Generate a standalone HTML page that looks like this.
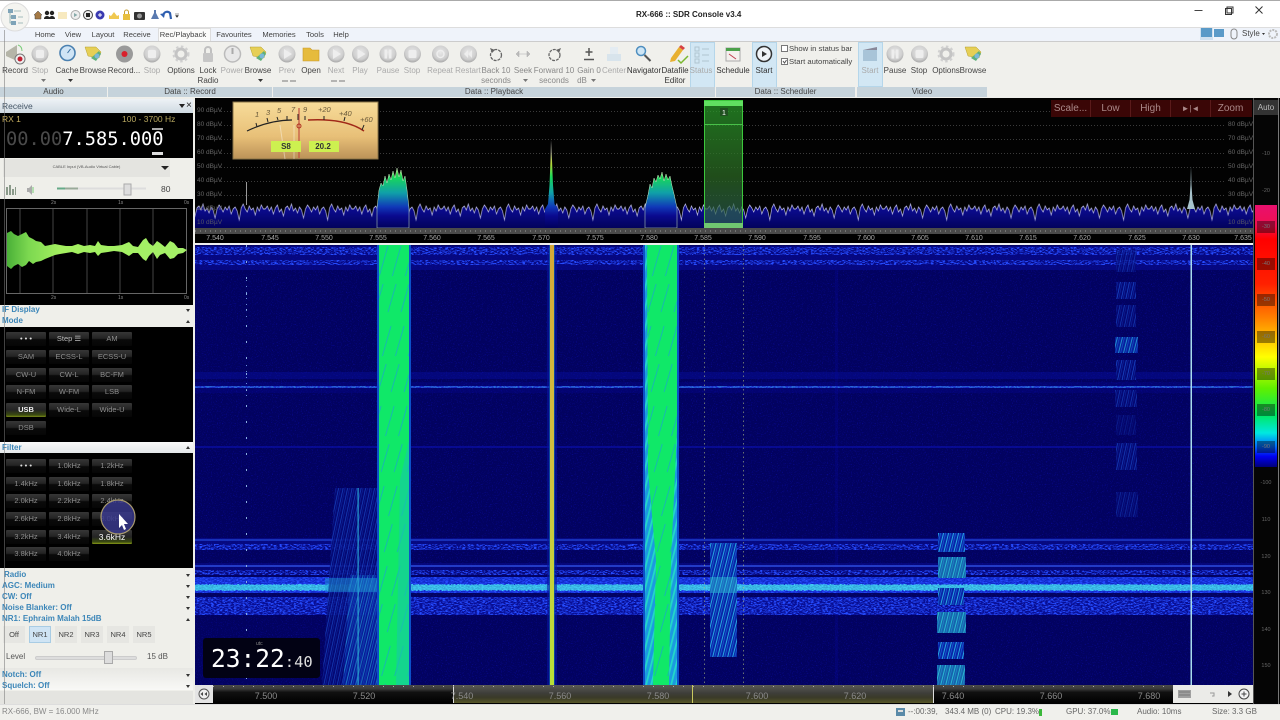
<!DOCTYPE html>
<html><head><meta charset="utf-8"><title>RX-666 :: SDR Console v3.4</title>
<style>
html,body{margin:0;padding:0;width:1280px;height:720px;overflow:hidden;background:#f0f0ec}
body{position:relative;font-family:"Liberation Sans",sans-serif;font-size:8px;color:#333}
div,span.a{position:absolute;white-space:nowrap}
.t{transform:translateX(-50%);line-height:10px;top:66px;color:#444;font-size:8px}
.g{color:#aaa}
.gl{top:87px;height:10px;line-height:10px;background:#c6d3db;text-align:center;color:#444;font-size:8px}
.m{top:29px;line-height:12px;transform:translateX(-50%);color:#444;font-size:7.6px}
.b{background:linear-gradient(#363636 0,#242424 45%,#0a0a0a 55%,#060606);width:40px;height:14px;line-height:14px;text-align:center;color:#8c8c8c;font-size:7.5px;border-radius:1px}
.h{left:2px;color:#3c86b8;font-weight:bold;font-size:8px;line-height:10px}
.ar{left:186px;width:0;height:0;border-left:2px solid transparent;border-right:2px solid transparent;border-top:3px solid #333}
.aru{left:186px;width:0;height:0;border-left:2px solid transparent;border-right:2px solid transparent;border-bottom:3px solid #333}
.nr{top:626px;height:17px;line-height:17px;width:22px;text-align:center;background:#e6e6e2;color:#444;font-size:7.5px}
.db{font-size:6.5px;color:#666;line-height:8px}
.fq{top:234px;transform:translateX(-50%);font-size:7px;color:#aaa;line-height:9px}
.bq{top:691px;transform:translateX(-50%);font-size:9px;color:#8a8a8a;line-height:11px}
.r{top:100px;height:17px;line-height:17px;text-align:center;color:#a88;font-size:10px;width:39px;background:#3a0606;border-right:1px solid #5a1a1a}
.sc{left:1257px;width:18px;height:12px;line-height:12px;text-align:center;font-size:5.5px;color:#777;background:rgba(0,0,0,.4)}
.sd{left:1257px;width:18px;text-align:center;font-size:5.5px;color:#666;line-height:8px}
.st{top:707px;line-height:10px;font-size:8px;color:#666}
</style></head><body>
<div style="left:0;top:0;width:1280px;height:1px;background:#aaa"></div>
<div style="left:0;top:1px;width:1280px;height:26px;background:#fff"></div>
<div style="left:0;top:27px;width:1280px;height:14px;background:#eff3fa;border-top:1px solid #ddd;box-sizing:border-box"></div>
<div style="left:0;top:41px;width:1280px;height:57px;background:#f0f0ec;border-top:1px solid #ccc;box-sizing:border-box"></div>

<div style="left:690px;top:42px;width:23px;height:44px;background:#d2e7f4;border:1px solid #b5d6ea"></div>
<div style="left:752px;top:42px;width:23px;height:44px;background:#d2e7f4;border:1px solid #b5d6ea"></div>
<div style="left:858px;top:42px;width:23px;height:43px;background:#d2e7f4;border:1px solid #b5d6ea"></div>

<svg style="position:absolute;left:0;top:0" width="1280" height="98">
<defs>
<radialGradient id="dg" cx=".5" cy=".4" r=".6"><stop offset="0" stop-color="#e8e8e8"/><stop offset=".7" stop-color="#cfcfcf"/><stop offset="1" stop-color="#a8a8a8"/></radialGradient>
<g id="disc"><circle r="8.5" fill="url(#dg)"/><rect x="-4" y="-4" width="8" height="8" rx="1.5" fill="#eee"/></g>
<g id="pdisc"><circle r="8.5" fill="url(#dg)"/><path d="M-3-5 5 0-3 5z" fill="#eee"/></g>
<g id="pause"><circle r="8.5" fill="url(#dg)"/><rect x="-3.5" y="-4.5" width="2.6" height="9" fill="#eee"/><rect x=".9" y="-4.5" width="2.6" height="9" fill="#eee"/></g>
<g id="gear"><circle r="5" fill="none" stroke="#c4c4c4" stroke-width="3"/><circle r="7.5" fill="none" stroke="#d0d0d0" stroke-width="2" stroke-dasharray="2.5 2.5"/></g>
<g id="brow"><path d="M-8-7 3-7 8-2 6 4-5 2z" fill="#e6cf55" stroke="#b5a030" stroke-width=".5"/><path d="M-2 4 6-3 8 0 3 7z" fill="#5fb07a"/><circle cx="4" cy="2" r="2.5" fill="#7ab8d8"/></g>
</defs>
<circle cx="15" cy="17" r="14" fill="#f4f4f0" stroke="#ddd"/>
<g fill="#7fa4b8"><rect x="8" y="9" width="5" height="4"/><rect x="11" y="15" width="5" height="4"/><rect x="11" y="21" width="5" height="4"/></g>
<path d="M10 13v10h2M10 17h2M14 11h7M18 17h5M18 23h5" stroke="#8aa" fill="none" stroke-width=".8"/>
<path d="M34 15l4-4 4 4h-1v4h-6v-4z" fill="#a57a45" stroke="#444" stroke-width=".5"/>
<circle cx="47" cy="13" r="2.2" fill="#222"/><circle cx="52" cy="13" r="2.2" fill="#222"/><path d="M44 19c0-4 6-4 6 0zM49 19c0-4 6-4 6 0z" fill="#222"/>
<rect x="58" y="12" width="9" height="7" fill="#f7e9bf"/>
<circle cx="75.5" cy="15" r="4.5" fill="#eee" stroke="#aaa"/><path d="M74 13l3.5 2-3.5 2z" fill="#8aa"/>
<circle cx="88" cy="15" r="4.5" fill="#eee" stroke="#444"/><rect x="86" y="13" width="4" height="4" fill="#222"/>
<circle cx="100" cy="15" r="4.5" fill="#3a3ab0"/><path d="M98 15h4M100 13v4" stroke="#fff"/>
<path d="M109 19v-4l2 1 3-4 3 4 2-1v4z" fill="#f0c850"/>
<rect x="123" y="14" width="7" height="6" fill="#e8c040"/><path d="M124.5 14v-2a2 2 0 014 0v2" stroke="#c8a030" fill="none"/>
<rect x="134" y="12" width="11" height="8" rx="1" fill="#333"/><circle cx="139.5" cy="16" r="2.5" fill="#999"/>
<path d="M151 19l4-8 4 8z" fill="#5a7ab0"/><rect x="154" y="10" width="2" height="4" fill="#5a7ab0"/>
<path d="M163 16c1-5 5-5 7-3l1 6" fill="none" stroke="#2f5fb0" stroke-width="2.2"/><path d="M160 14l5-1-1 5z" fill="#2f5fb0"/>
<path d="M175 14h4M175.5 15.5h3l-1.5 2z" fill="#333" stroke="#333" stroke-width=".5"/>

<g transform="translate(14,54)"><path d="M-8-2 3-9V7L-8 2z" fill="#b5b5a8"/><circle cx="6" cy="5" r="5" fill="#eee" stroke="#777"/><circle cx="6" cy="5" r="2.5" fill="#c02030"/><path d="M4-9c3 1 4 3 4 6" stroke="#7c7" fill="none"/></g>
<use href="#disc" x="40" y="54"/>
<circle cx="67.5" cy="53" r="7.5" fill="#cfe4f5" stroke="#4a80b0" stroke-width="1.6"/><path d="M67.5 53l3-4" stroke="#3a70a0"/>
<use href="#brow" x="93" y="54"/>
<circle cx="124.5" cy="54" r="8.5" fill="#9a9a9a"/><circle cx="124.5" cy="54" r="3" fill="#d8202c"/>
<use href="#disc" x="152" y="54"/>
<use href="#gear" x="181" y="54"/>
<rect x="203" y="53" width="10" height="9" rx="1" fill="#c6c6c6"/><path d="M205 53v-3a3 3 0 016 0v3" stroke="#c0c0c0" stroke-width="2" fill="none"/>
<circle cx="232.5" cy="54" r="8" fill="#e8e8e8" stroke="#bbb" stroke-width="1.5"/><path d="M232.5 48v6" stroke="#aaa" stroke-width="2"/>
<use href="#brow" x="258" y="54"/>
<use href="#pdisc" x="287" y="54"/>
<path d="M303 48h7l2 2h7v11h-16z" fill="#e6bb3c" stroke="#c8992a" stroke-width=".6"/>
<use href="#pdisc" x="336" y="54"/><use href="#pdisc" x="360.5" y="54"/>
<use href="#pause" x="388" y="54"/><use href="#disc" x="412.5" y="54"/>
<circle cx="440.5" cy="54" r="8.5" fill="url(#dg)"/><circle cx="440.5" cy="54" r="3.5" fill="none" stroke="#eee" stroke-width="1.5"/>
<circle cx="468.5" cy="54" r="8.5" fill="url(#dg)"/><path d="M472 50v8l-4-4zM468 50v8l-4-4z" fill="#eee"/>
<circle cx="496" cy="55" r="5.5" fill="none" stroke="#666" stroke-width="1.3" stroke-dasharray="3 1"/><path d="M490 48l5 2-3 3z" fill="#666"/>
<path d="M516 54l3-3v6zM530 54l-3-3v6zM519 54h8" fill="#bbb" stroke="#aaa" stroke-width=".5"/>
<circle cx="554.5" cy="55" r="5.5" fill="none" stroke="#666" stroke-width="1.3" stroke-dasharray="3 1"/><path d="M561 48l-5 2 3 3z" fill="#666"/>
<path d="M589 48v8M585.5 52h7M584 59.5h10" stroke="#555" stroke-width="1.5" fill="none"/>
<rect x="607" y="54" width="14" height="7" fill="#d8e4ec"/><rect x="610" y="47" width="8" height="7" fill="#e4ecf2"/>
<circle cx="641" cy="51" r="4.5" fill="#cfe6f5" stroke="#4f8fc0" stroke-width="1.5"/><path d="M644.5 55l6 6" stroke="#555" stroke-width="2"/>
<path d="M671 58l8-11 4 3-8 11-5 1z" fill="#e8b030"/><path d="M679 47l2-2 4 3-2 2z" fill="#d84040"/><path d="M678 60l3 3 7-7" stroke="#7ab830" stroke-width="1.5" fill="none"/>
<g fill="none" stroke="#b0c4d0"><rect x="695" y="47" width="4" height="4"/><rect x="695" y="53" width="4" height="4"/><rect x="695" y="59" width="4" height="4"/><path d="M702 49h7M702 55h7M702 61h7"/></g>
<rect x="726" y="48" width="14" height="13" fill="#f4f0ee" stroke="#aaa"/><rect x="726" y="48" width="14" height="3" fill="#4ba04a"/><path d="M729 54l7 5" stroke="#c04050"/>
<circle cx="764" cy="54" r="7.5" fill="#f0f4f8" stroke="#333" stroke-width="1.5"/><path d="M762 51l5 3-5 3z" fill="#333"/>
<rect x="863" y="50" width="14" height="11" fill="#a8c4d8"/><path d="M863 50l14-3v3z" fill="#889"/>
<use href="#pause" x="895" y="54"/><use href="#disc" x="919.5" y="54"/><use href="#gear" x="946" y="54"/><use href="#brow" x="973" y="54"/>
<rect x="781.5" y="45.5" width="6" height="6" fill="#fff" stroke="#777"/>
<rect x="781.5" y="58.5" width="6" height="6" fill="#fff" stroke="#777"/><path d="M783 61l1.5 2 2-3" stroke="#555" fill="none"/>
<g fill="#333"><path d="M41 79h5l-2.5 3z" fill="#777"/><path d="M68 79h5l-2.5 3z"/><path d="M258 79h5l-2.5 3z"/><path d="M523 79h5l-2.5 3z" fill="#777"/><path d="M591 79h5l-2.5 3z" fill="#777"/>
<path d="M282 81h6M290 81h6" stroke="#777"/><path d="M331 81h6M339 81h6" stroke="#777"/></g>
<path d="M1194.5 10.5h8" stroke="#444"/><rect x="1225.5" y="8.5" width="6" height="6" fill="#fff" stroke="#333"/><rect x="1227" y="7" width="6" height="6" fill="none" stroke="#333"/>
<path d="M1255.5 6.5l7 7M1262.5 6.5l-7 7" stroke="#333"/>
<rect x="1201" y="28" width="11" height="9" fill="#5b9ac8"/><rect x="1214" y="29" width="10" height="8" fill="#5b9ac8"/><rect x="1200" y="28" width="13" height="12" fill="#5b9ac8" opacity=".2"/>
<rect x="1231" y="29" width="6" height="10" rx="3" fill="none" stroke="#888"/>
<circle cx="1273" cy="34" r="4" fill="none" stroke="#bbb" stroke-width="2" stroke-dasharray="2 1"/><path d="M1262 33h3l-1.5 2z" fill="#333"/>
</svg>

<div style="left:636px;top:10px;line-height:10px;color:#222;font-weight:bold;font-size:8px">RX-666 :: SDR Console v3.4</div>
<div style="left:158px;top:28px;width:53px;height:13px;background:#fbfbfa;border:1px solid #ddd;border-bottom:0;box-sizing:border-box"></div>
<div class="m" style="left:45px">Home</div><div class="m" style="left:73px">View</div><div class="m" style="left:103px">Layout</div><div class="m" style="left:137px">Receive</div><div class="m" style="left:183px">Rec/Playback</div><div class="m" style="left:234px">Favourites</div><div class="m" style="left:279px">Memories</div><div class="m" style="left:315px">Tools</div><div class="m" style="left:341px">Help</div>
<div style="left:1242px;top:29px;line-height:10px;color:#444">Style</div>

<div class="t" style="left:15px">Record</div><div class="t g" style="left:40px">Stop</div><div class="t" style="left:67px">Cache</div><div class="t" style="left:93px">Browse</div>
<div class="t" style="left:124px">Record...</div><div class="t g" style="left:152px">Stop</div><div class="t" style="left:181px">Options</div><div class="t" style="left:208px">Lock</div><div class="t" style="left:208px;top:76px">Radio</div><div class="t g" style="left:232px">Power</div><div class="t" style="left:258px">Browse</div>
<div class="t g" style="left:287px">Prev</div><div class="t" style="left:311px">Open</div><div class="t g" style="left:336px">Next</div><div class="t g" style="left:360px">Play</div><div class="t g" style="left:388px">Pause</div><div class="t g" style="left:412px">Stop</div><div class="t g" style="left:440px">Repeat</div><div class="t g" style="left:468px">Restart</div>
<div class="t g" style="left:496px;color:#888">Back 10</div><div class="t g" style="left:496px;top:76px;color:#888">seconds</div><div class="t g" style="left:523px;color:#888">Seek</div><div class="t g" style="left:554px;color:#888">Forward 10</div><div class="t g" style="left:554px;top:76px;color:#888">seconds</div><div class="t g" style="left:589px;color:#888">Gain 0</div><div class="t g" style="left:582px;top:76px;color:#888">dB</div><div class="t g" style="left:614px">Center</div><div class="t" style="left:644px;color:#333">Navigator</div><div class="t" style="left:675px;color:#333">Datafile</div><div class="t" style="left:675px;top:76px;color:#333">Editor</div><div class="t g" style="left:701px">Status</div><div class="t" style="left:733px;color:#333">Schedule</div><div class="t" style="left:764px;color:#333">Start</div>
<div style="left:789px;top:44px;line-height:10px;color:#444;font-size:7.7px">Show in status bar</div><div style="left:789px;top:57px;line-height:10px;color:#444;font-size:7.7px">Start automatically</div>
<div class="t g" style="left:870px">Start</div><div class="t" style="left:895px">Pause</div><div class="t" style="left:919px">Stop</div><div class="t" style="left:946px">Options</div><div class="t" style="left:973px">Browse</div>

<div class="gl" style="left:0;width:107px">Audio</div><div class="gl" style="left:108px;width:164px">Data :: Record</div><div class="gl" style="left:273px;width:442px">Data :: Playback</div><div class="gl" style="left:716px;width:139px">Data :: Scheduler</div><div class="gl" style="left:857px;width:130px">Video</div>

<div style="left:195px;top:98px;width:1085px;height:607px;background:#000"></div>

<svg style="position:absolute;left:195px;top:98px" width="1058" height="147" viewBox="195 98 1058 147">
<defs>
<linearGradient id="sp" gradientUnits="userSpaceOnUse" x1="0" y1="140" x2="0" y2="228"><stop offset="0" stop-color="#ddd"/><stop offset=".14" stop-color="#b8b8a0"/><stop offset=".27" stop-color="#b8d838"/><stop offset=".42" stop-color="#18d858"/><stop offset=".6" stop-color="#10a0a8"/><stop offset=".76" stop-color="#1038b8"/><stop offset=".86" stop-color="#0a0a90"/><stop offset="1" stop-color="#00005c"/></linearGradient>
<linearGradient id="fl" gradientUnits="userSpaceOnUse" x1="0" y1="0" x2="0" y2="33"><stop offset="0" stop-color="#0e0e98"/><stop offset=".5" stop-color="#0a0a88"/><stop offset="1" stop-color="#02025c"/></linearGradient>
<pattern id="tr" x="0" y="195" width="132" height="33" patternUnits="userSpaceOnUse" patternTransform="scale(.67 1)">
<path d="M0 33V14L3 11 6 16 9 12 12 19 15 13 18 10 21 17 24 14 27 21 30 13 33 11 36 15 39 9 42 16 45 13 48 18 51 12 54 15 57 23 60 14 63 10 66 13 69 17 72 12 75 15 78 11 81 19 84 14 87 12 90 16 93 25 96 13 99 9 102 14 105 17 108 11 111 15 114 13 117 20 120 12 123 16 126 10 129 14 132 14V33z" fill="url(#fl)"/>
<path d="M0 14L3 11 6 16 9 12 12 19 15 13 18 10 21 17 24 14 27 21 30 13 33 11 36 15 39 9 42 16 45 13 48 18 51 12 54 15 57 23 60 14 63 10 66 13 69 17 72 12 75 15 78 11 81 19 84 14 87 12 90 16 93 25 96 13 99 9 102 14 105 17 108 11 111 15 114 13 117 20 120 12 123 16 126 10 129 14 132 14" fill="none" stroke="#b8b8e4" stroke-width="1"/>
</pattern>
<linearGradient id="mk" x1="0" y1="0" x2="0" y2="1"><stop offset="0" stop-color="#2aa02a"/><stop offset=".6" stop-color="#2c6a24"/><stop offset="1" stop-color="#2a5a58"/></linearGradient>
</defs>
<rect x="195" y="98" width="1058" height="147" fill="#020202"/>
<g stroke="#3a3a3a" stroke-dasharray="1 2"><path d="M221 111.5H1226M221 125.5H1226M221 139.5H1226M221 153.5H1226M221 167.5H1226M221 181.5H1226M221 195.5H1226"/></g>
<rect x="195" y="195" width="1058" height="33" fill="url(#tr)"/>
<path d="M377 228V208L379 190 381 183 383 186 385 176 387 183 389 174 391 180 393 171 395 178 397 168 399 177 401 170 403 181 405 176 407 190 409 208V228z" fill="url(#sp)" stroke="#c8e8c0" stroke-width=".5"/>
<path d="M645 228V208L648 195 650 184 652 188 654 178 656 182 658 175 660 179 662 172 664 181 666 174 668 180 670 176 672 186 674 194 677 208V228z" fill="url(#sp)" stroke="#c8e8c0" stroke-width=".5"/>
<path d="M545 228V209L548 204 549.5 185 550.5 160 551 140 552 160 553 185 554.5 204 558 209V228z" fill="url(#sp)"/>
<path d="M246.5 205V182" stroke="#999"/>
<path d="M1187 209L1189.5 200 1190.5 185 1191 166 1191.5 185 1192.5 200 1195 209z" fill="#a8c4cc"/>
<rect x="704" y="100" width="39" height="128" fill="url(#mk)" opacity=".72"/>
<rect x="704.5" y="100.5" width="38" height="127" fill="none" stroke="#3cc83c"/>
<rect x="704" y="101" width="39" height="5" fill="#60e060"/><path d="M704 124.5h39" stroke="#48c048"/>
<rect x="704" y="223" width="39" height="5" fill="#70c870"/>
<rect x="720" y="108" width="8" height="8" fill="#205020"/>
<text x="724" y="115" font-size="7" fill="#fff" text-anchor="middle" font-family="Liberation Sans">1</text>
<rect x="195" y="228" width="1058" height="6" fill="#4a4a4a"/>
<path d="M195 231H1253" stroke="#999" stroke-dasharray="1 4"/>
<rect x="195" y="234" width="1058" height="9" fill="#000"/>
<rect x="195" y="243" width="1058" height="2" fill="#eee"/>
<defs><linearGradient id="vu" x1="0" y1="0" x2="0" y2="1"><stop offset="0" stop-color="#f7dc9a"/><stop offset=".6" stop-color="#e8c078"/><stop offset="1" stop-color="#bb9258"/></linearGradient></defs>
<rect x="233" y="102" width="145" height="57" fill="url(#vu)" stroke="#8a7448"/>
<path d="M247 131Q270 120 292 120" stroke="#222" stroke-width="1.2" fill="none"/>
<path d="M308 120Q345 118 364 131" stroke="#a02818" stroke-width="1.5" fill="none"/>
<path d="M257 127l-1-4M268 122l-1-4M278 120l-1-3M287 120v-4M298 120v-6M305 120v-4M324 120v-4M344 121l1-4M362 130l2-5" stroke="#222" fill="none"/>
<g font-family="Liberation Sans" font-style="italic" font-size="7.5" fill="#6a5a3a"><text x="255" y="117">1</text><text x="266" y="115">3</text><text x="277" y="113">5</text><text x="291" y="112">7</text><text x="303" y="112">9</text><text x="318" y="112">+20</text><text x="339" y="116">+40</text><text x="360" y="122">+60</text></g>
<path d="M299 108V158" stroke="#c05040" stroke-width="1.2"/><circle cx="299" cy="126" r="2" fill="none" stroke="#b03020" stroke-width="1"/>
<path d="M280 125L285 159M294 125V159" stroke="#fff" stroke-opacity=".4"/>
<rect x="271" y="141" width="30" height="11" fill="#cdf050"/><rect x="309" y="141" width="30" height="11" fill="#cdf050"/>
<g font-family="Liberation Sans" font-weight="bold" font-size="8" fill="#333" text-anchor="middle"><text x="286" y="149">S8</text><text x="323" y="149">20.2</text></g>
</svg>

<div style="left:1051px;top:100px;width:201px;height:17px;background:#3a0606"></div>
<div class="r" style="left:1051px">Scale...</div><div class="r" style="left:1091px">Low</div><div class="r" style="left:1131px">High</div><div class="r" style="left:1171px;font-size:8px">►|◄</div><div class="r" style="left:1211px;border:0">Zoom</div>

<div class="db" style="left:197px;top:107px">90 dBµV</div><div class="db" style="left:197px;top:121px">80 dBµV</div><div class="db" style="left:197px;top:135px">70 dBµV</div><div class="db" style="left:197px;top:149px">60 dBµV</div><div class="db" style="left:197px;top:163px">50 dBµV</div><div class="db" style="left:197px;top:177px">40 dBµV</div><div class="db" style="left:197px;top:191px">30 dBµV</div><div class="db" style="left:197px;top:205px">20 dBµV</div><div class="db" style="left:197px;top:219px;color:#556">10 dBµV</div>
<div class="db" style="left:1228px;top:121px">80 dBµV</div><div class="db" style="left:1228px;top:135px">70 dBµV</div><div class="db" style="left:1228px;top:149px">60 dBµV</div><div class="db" style="left:1228px;top:163px">50 dBµV</div><div class="db" style="left:1228px;top:177px">40 dBµV</div><div class="db" style="left:1228px;top:191px">30 dBµV</div><div class="db" style="left:1228px;top:219px;color:#556">10 dBµV</div>

<div class="fq" style="left:215px">7.540</div><div class="fq" style="left:270px">7.545</div><div class="fq" style="left:324px">7.550</div><div class="fq" style="left:378px">7.555</div><div class="fq" style="left:432px">7.560</div><div class="fq" style="left:486px">7.565</div><div class="fq" style="left:541px">7.570</div><div class="fq" style="left:595px">7.575</div><div class="fq" style="left:649px">7.580</div><div class="fq" style="left:703px">7.585</div><div class="fq" style="left:757px">7.590</div><div class="fq" style="left:812px">7.595</div><div class="fq" style="left:866px">7.600</div><div class="fq" style="left:920px">7.605</div><div class="fq" style="left:974px">7.610</div><div class="fq" style="left:1028px">7.615</div><div class="fq" style="left:1082px">7.620</div><div class="fq" style="left:1137px">7.625</div><div class="fq" style="left:1191px">7.630</div><div class="fq" style="left:1243px">7.635</div>

<svg style="position:absolute;left:195px;top:245px" width="1058" height="440" viewBox="195 245 1058 440">
<defs>
<filter id="n" x="0" y="0" width="100%" height="100%" color-interpolation-filters="sRGB"><feTurbulence type="fractalNoise" baseFrequency="0.8 0.9" numOctaves="2" seed="3"/><feColorMatrix values="0 0 0 0 .03  0 0 0 0 .03  0 0 0 0 .55  5 0 0 0 -2.9"/></filter>
<filter id="nh" x="0" y="0" width="100%" height="100%" color-interpolation-filters="sRGB"><feTurbulence type="fractalNoise" baseFrequency="0.35 1.1" numOctaves="2" seed="9"/><feColorMatrix values="0 0 0 0 .15  0 0 0 0 .3  0 0 0 0 1  7 0 0 0 -3.3"/></filter>
<filter id="nc" x="0" y="0" width="100%" height="100%" color-interpolation-filters="sRGB"><feTurbulence type="fractalNoise" baseFrequency="0.5 1.2" numOctaves="2" seed="5"/><feColorMatrix values="0 0 0 0 .25  0 0 0 0 .8  0 0 0 0 .95  7 0 0 0 -3"/></filter>
<pattern id="s1" width="5" height="30" patternUnits="userSpaceOnUse" patternTransform="skewX(-14)"><rect width="5" height="30" fill="#0826a8"/><rect x="1" width="1" height="30" fill="#28a8e0"/><rect x="3.3" width=".7" height="30" fill="#1868d8"/></pattern>
<pattern id="s2" width="4.5" height="30" patternUnits="userSpaceOnUse" patternTransform="skewX(-12)"><rect width="4.5" height="30" fill="#040a78"/><rect x="1" width=".7" height="30" fill="#1c50d0"/><rect x="3" width=".4" height="30" fill="#1438b8"/></pattern>
<pattern id="s3" width="5" height="26" patternUnits="userSpaceOnUse" patternTransform="skewX(-14)"><rect width="5" height="26" fill="#1c9ae0"/><rect x="1" width="1.8" height="26" fill="#22d8c8"/></pattern>
<pattern id="g1" width="13" height="80" patternUnits="userSpaceOnUse" patternTransform="skewX(-16)"><rect width="13" height="80" fill="#10e868"/><rect x="3" y="6" width="1" height="30" fill="#18b8b0"/><rect x="9" y="44" width="1" height="28" fill="#18b8b0"/></pattern>
<clipPath id="w"><rect x="195" y="245" width="1058" height="440"/></clipPath>
<linearGradient id="yl" x1="0" y1="0" x2="0" y2="1"><stop offset="0" stop-color="#d4a838"/><stop offset=".5" stop-color="#d0c040"/><stop offset="1" stop-color="#b8e038"/></linearGradient>
</defs>
<g clip-path="url(#w)">
<rect x="195" y="245" width="1058" height="440" fill="#020260"/>
<rect x="195" y="245" width="1058" height="440" filter="url(#n)"/>
<rect x="195" y="246" width="1058" height="24" fill="#0a10a8" opacity=".45"/>
<rect x="195" y="247" width="1058" height="8" filter="url(#nh)"/><rect x="195" y="260" width="1058" height="5" filter="url(#nh)"/>
<rect x="835" y="270" width="3" height="415" fill="#0808a0" opacity=".25"/>
<rect x="195" y="372" width="1058" height="7" fill="#0a10b0" opacity=".35"/>
<rect x="195" y="386" width="1058" height="2" fill="#2030d0"/><rect x="195" y="386" width="1058" height="2" filter="url(#nc)" opacity=".6"/><rect x="195" y="382" width="1058" height="11" fill="#0808a0" opacity=".25"/>
<rect x="195" y="446" width="1058" height="2" fill="#0c10b0" opacity=".6"/>
<rect x="195" y="538" width="1058" height="12" fill="#0a10a0" opacity=".5"/><rect x="195" y="539" width="1058" height="2" fill="#2040d0" opacity=".7"/><rect x="195" y="544" width="1058" height="6" filter="url(#nh)"/>
<rect x="195" y="563" width="1058" height="12" fill="#0a0e98" opacity=".45"/><rect x="195" y="565" width="1058" height="2" fill="#2a48d8" opacity=".8"/><rect x="195" y="570" width="1058" height="5" filter="url(#nh)"/>
<rect x="195" y="577" width="1058" height="16" fill="#1028c8"/><rect x="195" y="577" width="1058" height="16" filter="url(#nh)"/>
<rect x="195" y="585" width="1058" height="5" fill="#34a8d8"/><rect x="195" y="584" width="1058" height="7" filter="url(#nc)"/>
<rect x="195" y="597" width="1058" height="18" fill="#0c14a8" opacity=".7"/><rect x="195" y="597" width="1058" height="18" filter="url(#nh)"/>
<polygon points="335,488 378,488 378,685 322,685" fill="url(#s2)" opacity=".85"/>
<polygon points="350,575 378,575 378,685 343,685" fill="url(#s1)" opacity=".6"/>
<rect x="357.5" y="488" width="1.2" height="197" fill="#28a0d0"/>
<rect x="325" y="578" width="55" height="14" fill="#20a0d8" opacity=".45"/>
<polygon points="379,245 410,245 409,685 379,685" fill="url(#g1)"/>
<polygon points="400,480 409,440 409,685 396,685" fill="#18c8a8" opacity=".6"/>
<rect x="645" y="245" width="32" height="440" fill="url(#s3)"/>
<polygon points="647,245 677,245 677,430 671,560 669,685 653,685 656,560 648,470" fill="url(#g1)"/>
<rect x="377" y="245" width="2" height="440" fill="#0c50c8"/><rect x="409" y="245" width="2" height="440" fill="#0c50c8"/>
<rect x="643" y="245" width="2" height="440" fill="#0c50c8"/><rect x="677" y="245" width="2" height="440" fill="#0c50c8"/>
<rect x="547" y="245" width="10" height="440" fill="#0814a0" opacity=".6"/>
<rect x="549" y="245" width="6" height="440" fill="#1060a0" opacity=".7"/>
<rect x="550" y="245" width="4" height="440" fill="url(#yl)"/>
<rect x="710" y="543" width="27" height="114" fill="url(#s1)"/>
<rect x="710" y="577" width="27" height="16" fill="#30c8d8" opacity=".45"/>
<g fill="url(#s1)"><rect x="938" y="533" width="27" height="19"/><rect x="938" y="557" width="28" height="21"/><rect x="938" y="588" width="26" height="17"/><rect x="937" y="612" width="29" height="21"/><rect x="938" y="642" width="26" height="17"/><rect x="937" y="665" width="28" height="20"/></g>
<g fill="#30d8b8" opacity=".35"><rect x="938" y="557" width="28" height="21"/><rect x="937" y="612" width="29" height="21"/><rect x="937" y="665" width="28" height="20"/></g>
<g fill="url(#s2)"><rect x="1116" y="282" width="20" height="17"/><rect x="1116" y="360" width="20" height="20"/><rect x="1116" y="250" width="20" height="22" opacity=".7"/><rect x="1116" y="305" width="20" height="22" opacity=".8"/><rect x="1115" y="390" width="22" height="17" opacity=".8"/><rect x="1116" y="415" width="20" height="20" opacity=".4"/><rect x="1116" y="443" width="21" height="27" opacity=".85"/><rect x="1116" y="492" width="22" height="25" opacity=".6"/></g>
<rect x="1115" y="337" width="23" height="16" fill="url(#s1)" opacity=".85"/>
<rect x="1190.5" y="245" width="1.5" height="440" fill="#a8dcec"/>
<path d="M246.5 245V685" stroke="#8ab0e0" stroke-dasharray="2 14"/>
<path d="M246.5 280V320M246.5 365V400" stroke="#6a90d8" stroke-dasharray="1 5"/>
<path d="M704.5 245V685M743.5 245V685" stroke="#b8c880" stroke-width=".8" stroke-dasharray="1.5 3" opacity=".7"/>
</g>
</svg>

<div style="left:203px;top:638px;width:117px;height:40px;background:#020214;border-radius:3px"></div>
<div style="left:256px;top:641px;font-size:5px;color:#888;line-height:6px">utc</div>
<div style="left:211px;top:645px;font-family:'DejaVu Sans Mono',monospace;font-size:24.5px;color:#fff;line-height:28px">23:22<span style="font-size:15.5px;color:#ddd">:40</span></div>

<div style="left:195px;top:685px;width:18px;height:18px;background:#e4e4e4"></div>
<div style="left:213px;top:685px;width:240px;height:18px;background:linear-gradient(#4a4a4a 0,#3a3a3a 22%,#111 40%,#000)"></div>
<div style="left:453px;top:685px;width:480px;height:18px;background:linear-gradient(#5a5a55 0,#3e3e3a 45%,#3a3a28 70%,#565628)"></div>
<div style="left:933px;top:685px;width:240px;height:18px;background:linear-gradient(#4a4a4a 0,#3a3a3a 22%,#111 40%,#000)"></div>
<div style="left:1173px;top:685px;width:80px;height:18px;background:#ebebe8"></div>
<div style="left:453px;top:685px;width:1px;height:18px;background:#ddd"></div><div style="left:692px;top:685px;width:1px;height:18px;background:#c8c860"></div><div style="left:933px;top:685px;width:1px;height:18px;background:#ddd"></div>
<svg style="position:absolute;left:195px;top:685px" width="1058" height="18">
<path d="M18 1.5H978" stroke="#aaa" stroke-dasharray="1 9"/>
<circle cx="9" cy="9" r="5" fill="#eee" stroke="#555"/><path d="M8 7L5.5 9 8 11zM12 7L9.5 9 12 11z" fill="#444"/>
<rect x="983" y="5" width="13" height="8" fill="#a0a0a0"/><path d="M984 7h11M984 10h11" stroke="#777"/>
<path d="M1015 8l4 0v3h-2" stroke="#999" fill="none"/><path d="M1033 6l4 3-4 3z" fill="#333"/>
<circle cx="1049" cy="9" r="5" fill="#f4f4f4" stroke="#444"/><path d="M1046.5 9h5M1049 6.5v5" stroke="#444"/>
</svg>
<div class="bq" style="left:266px">7.500</div><div class="bq" style="left:364px">7.520</div><div class="bq" style="left:462px">7.540</div><div class="bq" style="left:560px">7.560</div><div class="bq" style="left:658px">7.580</div><div class="bq" style="left:757px">7.600</div><div class="bq" style="left:855px">7.620</div><div class="bq" style="left:953px">7.640</div><div class="bq" style="left:1051px">7.660</div><div class="bq" style="left:1149px">7.680</div>

<div style="left:1253px;top:98px;width:27px;height:607px;background:#050505"></div>
<div style="left:1253px;top:98px;width:1px;height:607px;background:#555"></div>
<div style="left:1254px;top:100px;width:24px;height:15px;line-height:15px;background:#333;color:#bbb;font-size:8px;text-align:center">Auto</div>
<div style="left:1278px;top:98px;width:1px;height:607px;background:#777"></div>
<div style="left:1255px;top:205px;width:22px;height:262px;background:linear-gradient(#e8106e 0,#f01050 8%,#ff0000 13%,#ff2000 30%,#ff8000 43%,#ffff00 58%,#60f000 70%,#00e860 80%,#00e8e0 87%,#0070ff 92%,#0000f0 96%,#00007a 100%)"></div>
<div class="sd" style="top:150px">-10</div><div class="sd" style="top:187px">-20</div>
<div class="sc" style="top:221px">-30</div><div class="sc" style="top:258px">-40</div><div class="sc" style="top:294px">-50</div><div class="sc" style="top:331px">-60</div><div class="sc" style="top:368px">-70</div><div class="sc" style="top:404px">-80</div><div class="sc" style="top:441px">-90</div>
<div class="sd" style="top:479px">-100</div><div class="sd" style="top:516px">110</div><div class="sd" style="top:553px">120</div><div class="sd" style="top:589px">130</div><div class="sd" style="top:626px">140</div><div class="sd" style="top:662px">150</div>

<div style="left:0;top:98px;width:195px;height:607px;background:#efefea"></div>
<div style="left:0;top:99px;width:193px;height:14px;background:linear-gradient(#eef2f6,#cfdae2);line-height:14px;text-indent:2px;color:#456;font-size:8.5px">Receive</div>
<div style="left:179px;top:104px;width:0;height:0;border-left:3px solid transparent;border-right:3px solid transparent;border-top:4px solid #222"></div>
<div style="left:186px;top:100px;line-height:11px;font-size:10px;color:#222">×</div>
<div style="left:0;top:113px;width:193px;height:45px;background:#000"></div>
<div style="left:2px;top:114px;line-height:10px;color:#c8b060;font-size:8.5px">RX 1</div>
<div style="left:122px;top:114px;line-height:10px;color:#b8a860;font-size:8.5px">100 - 3700 Hz</div>
<div style="left:6px;top:129px;font-family:'DejaVu Sans Mono',monospace;font-size:18.7px;line-height:22px;color:#fff"><span style="color:#4a4a4a">00.00</span>7.585.000</div>
<div style="left:152px;top:128px;width:11px;height:2px;background:#aaa"></div><div style="left:152px;top:152px;width:11px;height:3px;background:#ddd"></div>
<div style="left:3px;top:159px;width:167px;height:18px;background:#e4e4e0;line-height:16px;text-align:center;font-size:4px;color:#555">CABLE Input (VB-Audio Virtual Cable)</div>
<div style="left:161px;top:166px;width:0;height:0;border-left:4px solid transparent;border-right:4px solid transparent;border-top:4px solid #222"></div>
<svg style="position:absolute;left:0;top:180px" width="195" height="20">
<g fill="#8a9a8a"><rect x="6" y="7" width="2" height="8"/><rect x="9" y="5" width="2" height="10"/><rect x="12" y="9" width="2" height="6"/><rect x="15" y="7" width="1" height="8"/></g>
<path d="M27 8h2l3-3v10l-3-3h-2z" fill="#aaa"/><path d="M33 7v6" stroke="#7c7"/>
<rect x="57" y="7.5" width="89" height="2" fill="#ddd"/><rect x="57" y="7.5" width="21" height="2" fill="#9a9"/><rect x="57" y="7.5" width="8" height="2" fill="#6a8"/>
<rect x="124" y="4" width="7" height="11" fill="#ddd" stroke="#aaa"/>
</svg>
<div style="left:161px;top:184px;line-height:10px;color:#444;font-size:8.5px">80</div>

<div style="left:0;top:199px;width:193px;height:106px;background:#000"></div>
<svg style="position:absolute;left:0;top:199px" width="193" height="106">
<defs><linearGradient id="au" x1="0" y1="0" x2="1" y2="0"><stop offset="0" stop-color="#4ab038"/><stop offset=".12" stop-color="#7cd850"/><stop offset=".3" stop-color="#a4f060"/><stop offset="1" stop-color="#a4f068"/></linearGradient></defs>
<rect x="6.5" y="9.5" width="180" height="85" fill="none" stroke="#666"/>
<path d="M20 10V94M53 10V94M87 10V94M120 10V94M153 10V94" stroke="#444"/>
<path d="M7 34L11 32 14 35 18 37 22 35 26 33 29 38 33 40 36 42 41 43 45 47 50 46 55 45 60 46 66 47 72 47 78 45 84 47 90 46 95 47 98 42 101 46 108 47 114 47 122 46 129 43 133 47 138 48 143 41 146 39 149 44 153 47 157 42 160 44 165 48 170 42 174 44 178 49 183 49 187 51 183 54 178 55 174 59 170 60 165 54 160 56 157 60 153 53 149 57 146 62 143 60 138 54 133 54 129 57 122 53 114 52 108 53 101 54 98 57 95 53 90 54 84 53 78 55 72 53 66 54 60 55 55 56 50 58 45 60 41 62 36 63 33 65 29 62 26 66 22 68 18 65 14 67 11 70 7 67z" fill="url(#au)"/>
</svg>
<div style="left:51px;top:200px;font-size:5px;color:#888;line-height:6px">2s</div><div style="left:118px;top:200px;font-size:5px;color:#888;line-height:6px">1s</div><div style="left:184px;top:200px;font-size:5px;color:#888;line-height:6px">0s</div>
<div style="left:51px;top:295px;font-size:5px;color:#888;line-height:6px">2s</div><div style="left:118px;top:295px;font-size:5px;color:#888;line-height:6px">1s</div><div style="left:184px;top:295px;font-size:5px;color:#888;line-height:6px">0s</div>

<div class="h" style="top:305px">IF Display</div><div class="ar" style="top:309px"></div>
<div class="h" style="top:316px">Mode</div><div class="aru" style="top:320px"></div>
<div style="left:0;top:327px;width:193px;height:115px;background:#000"></div>
<div class="b" style="left:6px;top:332px;color:#ddd">• • •</div><div class="b" style="left:49px;top:332px;color:#bbb">Step ☰</div><div class="b" style="left:92px;top:332px">AM</div>
<div class="b" style="left:6px;top:350px">SAM</div><div class="b" style="left:49px;top:350px">ECSS-L</div><div class="b" style="left:92px;top:350px">ECSS-U</div>
<div class="b" style="left:6px;top:368px">CW-U</div><div class="b" style="left:49px;top:368px">CW-L</div><div class="b" style="left:92px;top:368px">BC-FM</div>
<div class="b" style="left:6px;top:385px">N-FM</div><div class="b" style="left:49px;top:385px">W-FM</div><div class="b" style="left:92px;top:385px">LSB</div>
<div class="b" style="left:6px;top:403px;color:#eee;font-weight:bold;background:linear-gradient(#363636,#242424 50%,#3a4a10 85%,#7a8a18)">USB</div><div class="b" style="left:49px;top:403px">Wide-L</div><div class="b" style="left:92px;top:403px">Wide-U</div>
<div class="b" style="left:6px;top:421px">DSB</div>

<div style="left:0;top:442px;width:193px;height:11px;background:linear-gradient(#fafafa,#e4e8ea)"></div>
<div class="h" style="top:443px">Filter</div><div class="aru" style="top:446px"></div>
<div style="left:0;top:453px;width:193px;height:115px;background:#000"></div>
<div class="b" style="left:6px;top:459px;color:#ddd">• • •</div><div class="b" style="left:49px;top:459px">1.0kHz</div><div class="b" style="left:92px;top:459px">1.2kHz</div>
<div class="b" style="left:6px;top:477px">1.4kHz</div><div class="b" style="left:49px;top:477px">1.6kHz</div><div class="b" style="left:92px;top:477px">1.8kHz</div>
<div class="b" style="left:6px;top:494px">2.0kHz</div><div class="b" style="left:49px;top:494px">2.2kHz</div><div class="b" style="left:92px;top:494px">2.4kHz</div>
<div class="b" style="left:6px;top:512px">2.6kHz</div><div class="b" style="left:49px;top:512px">2.8kHz</div><div class="b" style="left:92px;top:512px">3.0kHz</div>
<div class="b" style="left:6px;top:530px">3.2kHz</div><div class="b" style="left:49px;top:530px">3.4kHz</div><div class="b" style="left:92px;top:530px;color:#fff;font-size:8.5px;background:linear-gradient(#363636,#242424 50%,#3a4a10 85%,#8a9a18)">3.6kHz</div>
<div class="b" style="left:6px;top:547px">3.8kHz</div><div class="b" style="left:49px;top:547px">4.0kHz</div>
<svg style="position:absolute;left:95px;top:495px" width="50" height="44">
<circle cx="23" cy="22" r="17" fill="#38388c" fill-opacity=".85" stroke="#a89a70" stroke-width="1.2"/>
<path d="M24 19V33L27 30 29 35 31 34 29 29H33z" fill="#fff"/>
</svg>

<div class="h" style="top:570px;left:4px">Radio</div><div class="ar" style="top:574px"></div>
<div class="h" style="top:581px">AGC: Medium</div><div class="ar" style="top:585px"></div>
<div class="h" style="top:592px">CW: Off</div><div class="ar" style="top:596px"></div>
<div class="h" style="top:603px">Noise Blanker: Off</div><div class="ar" style="top:607px"></div>
<div class="h" style="top:614px">NR1: Ephraim Malah 15dB</div><div class="aru" style="top:618px"></div>
<div class="nr" style="left:3px">Off</div><div class="nr" style="left:29px;background:#cfe4f4;border:1px solid #a8cce4;box-sizing:border-box;line-height:15px">NR1</div><div class="nr" style="left:55px">NR2</div><div class="nr" style="left:81px">NR3</div><div class="nr" style="left:107px">NR4</div><div class="nr" style="left:133px">NR5</div>
<div style="left:6px;top:652px;line-height:10px;color:#555">Level</div>
<div style="left:35px;top:656px;width:100px;height:2px;background:#ddd;border:1px solid #ccc;box-sizing:content-box;border-radius:2px"></div>
<div style="left:104px;top:651px;width:7px;height:11px;background:#ddd;border:1px solid #aaa"></div>
<div style="left:147px;top:652px;line-height:10px;color:#555">15 dB</div>
<div style="left:0;top:668px;width:193px;height:22px;background:linear-gradient(#e8e8e4,#f8f8f6)"></div>
<div class="h" style="top:670px">Notch: Off</div><div class="ar" style="top:674px"></div>
<div class="h" style="top:681px">Squelch: Off</div><div class="ar" style="top:685px"></div>
<div style="left:0;top:691px;width:193px;height:13px;background:#e4e4e0"></div>
<div style="left:4px;top:30px;width:1px;height:675px;background:rgba(120,120,120,.55)"></div>

<div style="left:0;top:704px;width:1280px;height:16px;background:#f0f0ec;border-top:1px solid #ddd;box-sizing:border-box"></div>
<div class="st" style="left:2px;color:#888">RX-666, BW = 16.000 MHz</div>
<svg style="position:absolute;left:895px;top:706px" width="12" height="12"><rect x="1" y="2" width="9" height="8" fill="#5a8aa8"/><rect x="3" y="4" width="5" height="2" fill="#ddd"/></svg>
<div class="st" style="left:908px">--:00:39,</div><div class="st" style="left:945px">343.4 MB (0)</div><div class="st" style="left:995px">CPU: 19.3%</div>
<div style="left:1039px;top:709px;width:3px;height:7px;background:#3ab83a"></div>
<div class="st" style="left:1066px">GPU: 37.0%</div><div style="left:1111px;top:709px;width:7px;height:6px;background:#2ab84a"></div>
<div class="st" style="left:1137px">Audio: 10ms</div><div class="st" style="left:1212px">Size: 3.3 GB</div>
</body></html>
